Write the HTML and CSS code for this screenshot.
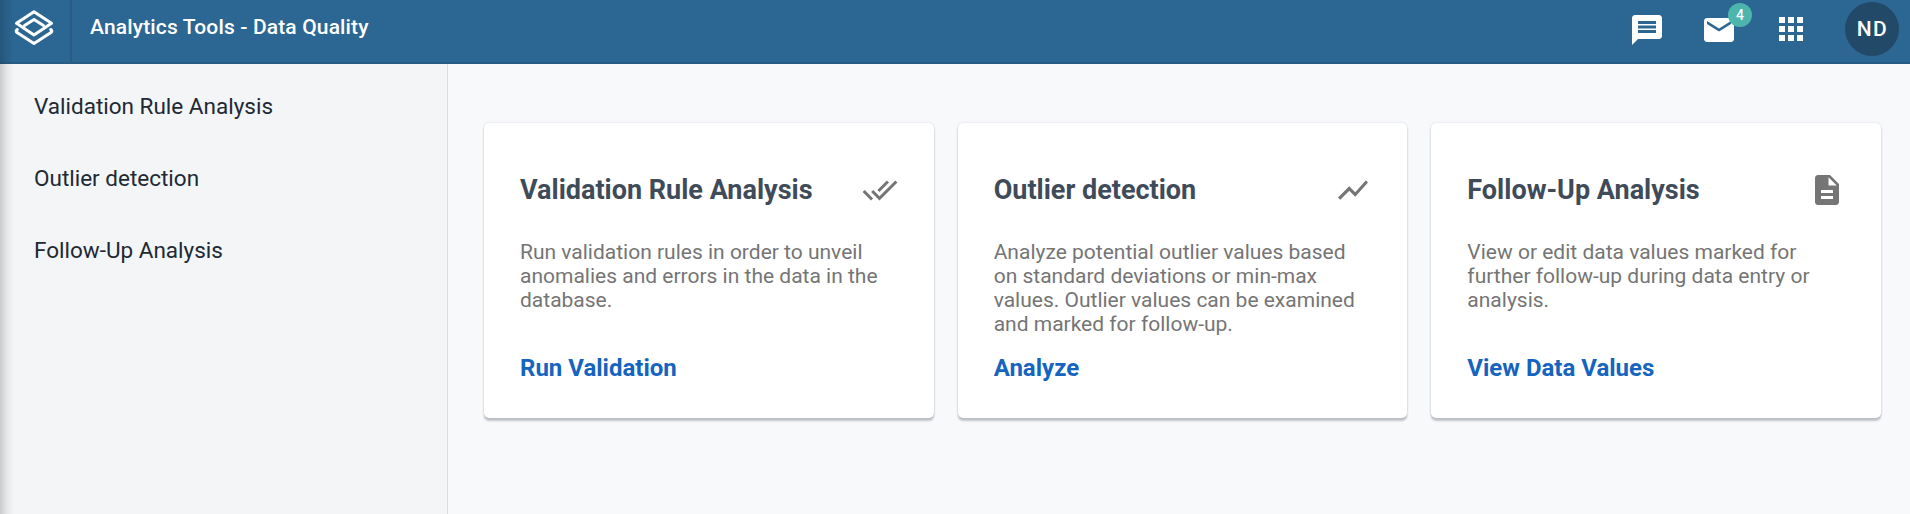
FILE: index.html
```
<!DOCTYPE html>
<html lang="en">
<head>
<meta charset="utf-8">
<title>Analytics Tools - Data Quality</title>
<link rel="stylesheet" href="styles.css">
</head>
<body>
<header class="header">
  <a class="logo">
    <svg class="logo-mark" viewBox="0 0 42 38">
      <path d="M21 2.700 38.500 14.300 21 25.900 3.500 14.300Z"/>
      <path d="M11.500 16.500 21 10.500 30.500 16.500"/>
      <path d="M4.300 20.500Q2.200 22.300 4 23.500L21 34.500 38 23.500Q39.800 22.300 37.700 20.500"/>
    </svg>
  </a>
  <h1 class="title">Analytics Tools - Data Quality</h1>
  <nav class="tools">
    <svg class="icon" viewBox="0 0 24 24"><path d="M20 2H4c-1.100 0-1.990.9-1.990 2L2 22l4-4h14c1.100 0 2-.9 2-2V4c0-1.100-.9-2-2-2zm-2 12H6v-2h12v2zm0-3H6V9h12v2zm0-3H6V6h12v2z"/></svg>
    <span class="mail">
      <svg class="icon" viewBox="0 0 24 24"><path d="M20 4H4c-1.100 0-1.990.9-1.990 2L2 18c0 1.100.9 2 2 2h16c1.100 0 2-.9 2-2V6c0-1.100-.9-2-2-2zm0 4l-8 5-8-5V6l8 5 8-5v2z"/></svg>
      <span class="badge">4</span>
    </span>
    <svg class="icon apps" viewBox="0 0 24 24"><path d="M4 8h4V4H4v4zm6 12h4v-4h-4v4zm-6 0h4v-4H4v4zm0-6h4v-4H4v4zm6 0h4v-4h-4v4zm6-10v4h4V4h-4zm-6 4h4V4h-4v4zm6 6h4v-4h-4v4zm0 6h4v-4h-4v4z"/></svg>
    <span class="avatar">ND</span>
  </nav>
</header>
<div class="layout">
  <nav class="sidebar">
    <a class="side-link">Validation Rule Analysis</a>
    <a class="side-link">Outlier detection</a>
    <a class="side-link">Follow-Up Analysis</a>
  </nav>
  <main class="cards">
    <section class="card">
      <div class="card-head">
        <h2 class="card-title">Validation Rule Analysis</h2>
        <svg class="icon" viewBox="0 0 24 24"><path d="M18 7l-1.410-1.410-6.340 6.340 1.410 1.410L18 7zm4.240-1.410L11.660 16.170 7.480 12l-1.410 1.410L11.660 19l12-12-1.420-1.410zM.41 13.410L6 19l1.410-1.410L1.830 12 .41 13.410z"/></svg>
      </div>
      <p class="card-text">Run validation rules in order to unveil<br>anomalies and errors in the data in the<br>database.</p>
      <a class="card-link">Run Validation</a>
    </section>
    <section class="card">
      <div class="card-head">
        <h2 class="card-title">Outlier detection</h2>
        <svg class="icon" viewBox="0 0 24 24"><path d="M3.500 18.490l6-6.010 4 4L22 6.920l-1.410-1.410-7.090 7.970-4-4L2 16.990z"/></svg>
      </div>
      <p class="card-text">Analyze potential outlier values based<br>on standard deviations or min-max<br>values. Outlier values can be examined<br>and marked for follow-up.</p>
      <a class="card-link">Analyze</a>
    </section>
    <section class="card">
      <div class="card-head">
        <h2 class="card-title">Follow-Up Analysis</h2>
        <svg class="icon" viewBox="0 0 24 24"><path d="M14 2H6c-1.100 0-1.990.9-1.990 2L4 20c0 1.100.89 2 1.990 2H18c1.100 0 2-.9 2-2V8l-6-6zm2 16H8v-2h8v2zm0-4H8v-2h8v2zm-3-5V3.500L18.500 9H13z"/></svg>
      </div>
      <p class="card-text">View or edit data values marked for<br>further follow-up during data entry or<br>analysis.</p>
      <a class="card-link">View Data Values</a>
    </section>
  </main>
</div>
<div class="edge-shade"></div>
</body>
</html>
```
FILE: styles.css
```
* { box-sizing: border-box; }
body {
  margin: 0;
  height: 514px;
  display: flex;
  flex-direction: column;
  overflow: hidden;
  background: #f8f9fb;
  font-family: Roboto, sans-serif;
}
.header {
  height: 64px;
  flex: none;
  display: flex;
  background: #2c6693;
  border-bottom: 2px solid #285c84;
  color: #fff;
}
.logo {
  width: 72px;
  padding: 9px 0 0 13px;
  border-right: 2px solid #285c84;
}
.logo-mark {
  display: block;
  width: 42px;
  height: 38px;
  fill: none;
  stroke: #fff;
  stroke-width: 3px;
  stroke-linejoin: round;
  stroke-linecap: round;
}
.title {
  margin: 14px 0 0 18px;
  font-size: 21px;
  line-height: 26px;
  font-weight: 500;
  letter-spacing: .15px;
}
.icon {
  display: block;
  flex: none;
  width: 36px;
  height: 36px;
  fill: currentColor;
}
.tools {
  margin-left: auto;
  display: flex;
  align-items: flex-start;
  gap: 36px;
  padding: 2px 11px 0 0;
}
.tools > .icon, .mail { margin-top: 10px; }
.tools > .apps { margin-top: 9px; }
.mail { position: relative; }
.badge {
  position: absolute;
  left: 27px;
  top: -9px;
  width: 24px;
  height: 24px;
  border-radius: 50%;
  background: #4db6ac;
  font-size: 14px;
  font-weight: 500;
  line-height: 24px;
  text-align: center;
}
.avatar {
  width: 54px;
  height: 54px;
  border-radius: 50%;
  background: #224968;
  font-size: 21px;
  font-weight: 500;
  letter-spacing: 1.500px;
  line-height: 54px;
  padding-left: 1px;
  text-align: center;
}
.layout { flex: 1; display: flex; }
.sidebar {
  width: 448px;
  flex: none;
  padding-top: 6px;
  background: #f3f5f7;
  border-right: 1px solid #d5dde5;
}
.side-link {
  display: block;
  height: 72px;
  padding-left: 34px;
  line-height: 72px;
  font-size: 22.500px;
  color: #212934;
}
.cards {
  flex: 1;
  display: grid;
  grid-template-columns: repeat(3, 1fr);
  gap: 24px;
  align-items: start;
  padding: 59px 29px 0 36px;
}
.card {
  height: 295px;
  display: flex;
  flex-direction: column;
  padding: 49px 36px 0;
  border-radius: 5px;
  background: #fff;
  box-shadow: 0 3px 2px rgba(64, 75, 90, .3), 0 0 2px rgba(64, 75, 90, .22);
}
.card-head {
  display: flex;
  justify-content: space-between;
  align-items: center;
  height: 36px;
  color: #757575;
}
.card-title {
  margin: 0;
  font-size: 27px;
  line-height: 36px;
  font-weight: 700;
  color: #404b5a;
}
.card-text {
  margin: 32px -20px 0 0;
  height: 96px;
  font-size: 21px;
  line-height: 24px;
  white-space: nowrap;
  color: #757575;
}
.card-link {
  margin-top: 18px;
  font-size: 24px;
  line-height: 28px;
  font-weight: 700;
  color: #1565c0;
}
.edge-shade {
  position: absolute;
  left: 0;
  top: 0;
  width: 14px;
  height: 514px;
  background: linear-gradient(to right, rgba(0, 0, 0, .17), rgba(0, 0, 0, .06) 50%, transparent);
}
```
